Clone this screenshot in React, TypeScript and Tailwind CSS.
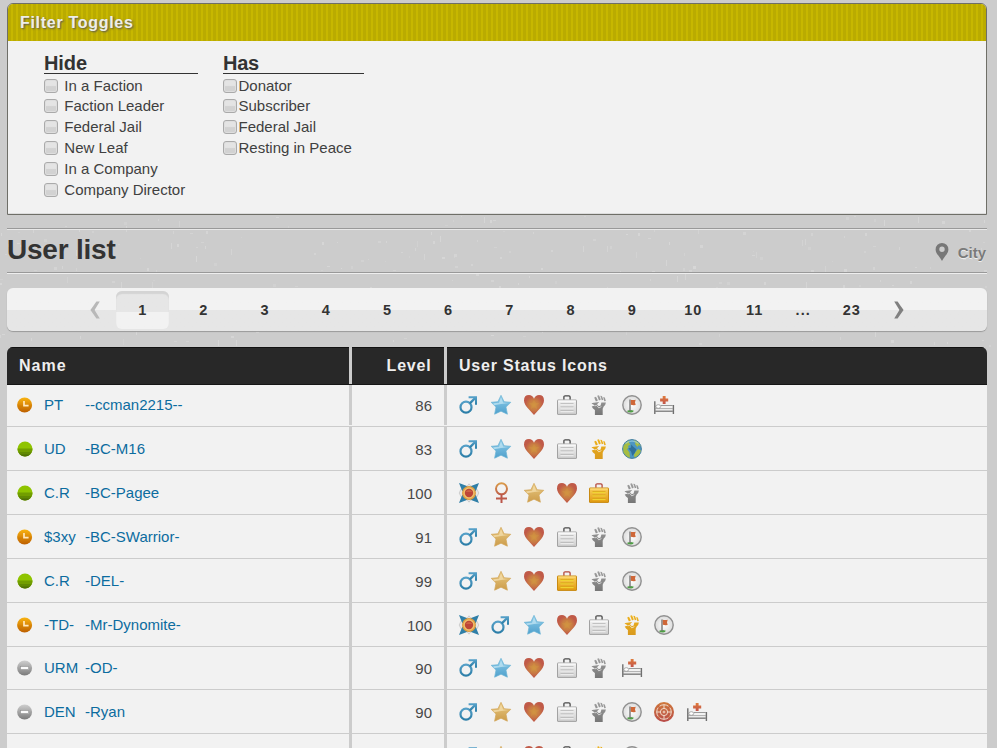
import React from "react";

type IconName =
  | "male" | "female" | "starBlue" | "starGold" | "heart" | "case" | "caseGold"
  | "fist" | "fistGold" | "flag" | "bed" | "globe" | "medal" | "target";

const STAR = "M10 .3 13.1 6.7 19.8 7.3 15 12.1 16.4 19.2 10 16.2 3.6 19.2 5 12.1 .2 7.3 6.9 6.7Z";

function Defs() {
  const g = (id: string, a: string, b: string) => (
    <linearGradient id={id} x1="0" y1="0" x2="0" y2="1">
      <stop offset="0" stopColor={a} />
      <stop offset="1" stopColor={b} />
    </linearGradient>
  );
  return (
    <svg className="absolute h-0 w-0">
      <defs>
        {g("gBlue", "#8fcdea", "#4fa0cc")}
        {g("gGold", "#e8c982", "#cc9c4a")}
        {g("gCase", "#f2f2f2", "#cfcfcf")}
        {g("gCaseGold", "#f9cf5a", "#e19a10")}
        {g("gMale", "#55a0c8", "#2c7ea8")}
        {g("gFemale", "#d99a4a", "#c0624b")}
        {g("gTarget", "#d07a3c", "#b84a48")}
        {g("gIdle", "#f9b310", "#bd5f00")}
        {g("gOff", "#cfcfcf", "#7a7a7a")}
        {g("gCross", "#e07c3c", "#c2544a")}
        <linearGradient id="gFist" gradientUnits="userSpaceOnUse" x1="0" y1="0" x2="0" y2="20">
          <stop offset="0" stopColor="#a0a0a0" />
          <stop offset="1" stopColor="#767676" />
        </linearGradient>
        <linearGradient id="gFistGold" gradientUnits="userSpaceOnUse" x1="0" y1="0" x2="0" y2="20">
          <stop offset="0" stopColor="#efb31c" />
          <stop offset="1" stopColor="#d99a1e" />
        </linearGradient>
        <radialGradient id="gHeart">
          <stop offset="0" stopColor="#cf9142" />
          <stop offset=".5" stopColor="#c97c43" />
          <stop offset=".9" stopColor="#c05a48" />
        </radialGradient>
        <radialGradient id="gFlag">
          <stop offset="0" stopColor="#ffffff" />
          <stop offset="1" stopColor="#dcdcdc" />
        </radialGradient>
      </defs>
    </svg>
  );
}

function Briefcase({ gold }: { gold?: boolean }) {
  return (
    <>
      <path d="M6.9 4.8V2Q6.9.8 8.1.8h3.8q1.2 0 1.2 1.2v2.8" fill="none" stroke={gold ? "#b4483c" : "#4a4a4a"} strokeWidth="1.3" />
      <rect x=".5" y="5" width="19" height="14.4" rx=".4" fill={gold ? "url(#gCaseGold)" : "url(#gCase)"} stroke={gold ? "#c98a12" : "#a2a2a2"} />
      <path d="M1.3 6h17.4" stroke={gold ? "#ffe08a" : "#fff"} />
      <path d="M3.5 9.6h13M3.5 12.8h13M3.5 16.6h13" stroke={gold ? "#f6e23a" : "#fafafa"} strokeWidth="1" />
      <path d="M3.5 8.7h13M3.5 11.9h13M3.5 15.7h13" stroke={gold ? "#d9a516" : "#b4b4b4"} strokeWidth=".9" />
    </>
  );
}

function Fist({ gold }: { gold?: boolean }) {
  return (
    <g fill={gold ? "url(#gFistGold)" : "url(#gFist)"}>
      <path d="M5.2 2.4 7 1.7 8.9 5.6 6.9 6.5Z" />
      <path d="M8.2.8 10 .3 11.8 4.6 10 5.4Z" />
      <path d="M11.3.7 12.9.9 14.4 4.8 12.8 5.3Z" />
      <path d="M14.2 2 15.8 2.6 16.8 5.9 15.3 6.3Z" />
      <path d="M2.5 8.6Q3.5 7.6 5 7.7L10.2 7 8 9.2 9.8 11.3 11.6 10.6 12.4 7.6 16.9 7.4Q16.6 10 14.7 11.6L13.7 13.8V20H5.9V14.9L4 13.6 2.7 11.6 6 10.4Z" />
      <path d="M5.8 10.9 7.6 10.3 9.8 12.9 12.4 11.6" fill="none" stroke="#f2f2f2" strokeWidth=".7" />
    </g>
  );
}

function Icon({ name }: { name: IconName }) {
  let body: React.ReactNode = null;
  switch (name) {
    case "male":
      body = (
        <g fill="none" stroke="url(#gMale)" strokeWidth="2.2">
          <circle cx="7" cy="12.2" r="5.5" />
          <path d="M10.8 8.4 16.8 2.4" />
          <path d="M9.6 2.2H17V9.8" strokeWidth="2" />
        </g>
      );
      break;
    case "female":
      body = (
        <g fill="none" strokeWidth="2">
          <circle cx="10.5" cy="5.8" r="5.5" stroke="url(#gFemale)" />
          <path d="M10.5 11.3V20" stroke="#bb564a" />
          <path d="M5 15.6h11" stroke="#bd5b4b" />
        </g>
      );
      break;
    case "starBlue":
      body = (
        <>
          <path d={STAR} fill="url(#gBlue)" stroke="#6db4d6" strokeWidth=".7" />
          <path d="M10 2.3 12.2 7.5 17.8 8.1Q10 8.8 3 10.2L2.2 8.2 8 7.7Z" fill="#c8e8f5" opacity=".7" />
        </>
      );
      break;
    case "starGold":
      body = (
        <>
          <path d={STAR} fill="url(#gGold)" stroke="#d2a65a" strokeWidth=".7" />
          <path d="M10 2.3 12.2 7.5 17.8 8.1Q10 8.8 3 10.2L2.2 8.2 8 7.7Z" fill="#f6e3b4" opacity=".7" />
        </>
      );
      break;
    case "heart":
      body = (
        <>
          <path d="M10 20Q7.9 17.8 4.8 14.3Q0 9 0 5.4Q0 0 5 0Q8.4 0 10 3.7Q11.6 0 15 0Q20 0 20 5.4Q20 9 15.2 14.3Q12.1 17.8 10 20Z" fill="url(#gHeart)" />
          <path d="m10 4.5 1.5 3.3 3.7.5-2.8 2.3.8 3.6-3.2-1.9-3.2 1.9.8-3.6-2.8-2.3 3.7-.5Z" fill="#d79e40" opacity=".3" />
        </>
      );
      break;
    case "case":
      body = <Briefcase />;
      break;
    case "caseGold":
      body = <Briefcase gold />;
      break;
    case "fist":
      body = <Fist />;
      break;
    case "fistGold":
      body = <Fist gold />;
      break;
    case "flag":
      body = (
        <>
          <circle cx="10" cy="10" r="9.2" fill="url(#gFlag)" stroke="#909090" strokeWidth="1.4" />
          <path d="M4.9 16Q8.5 14 11.8 15.8Q11.5 17.5 9 17.6Q6 17.6 4.9 16Z" fill="#4f9e46" />
          <path d="M8 4.5V16" stroke="#777" strokeWidth="1.4" />
          <path d="M8.8 4.7Q10.8 5.4 13.7 4.7L13 7.2 13.7 10Q10.8 10.4 8.8 9.8Z" fill="#cf6738" />
        </>
      );
      break;
    case "bed":
      body = (
        <>
          <path d="M8.7 1h2.9v2.5h2.6v2.9h-2.6v2.5H8.7V6.4H6.1V3.5h2.6Z" fill="url(#gCross)" />
          <path d="M6.7 10.5h12" stroke="#8f8f8f" strokeWidth=".9" />
          <path d="M1.4 13.6h17.4" stroke="#a5a5a5" strokeWidth=".9" />
          <ellipse cx="4.3" cy="11.5" rx="2.4" ry="1.8" fill="#fff" stroke="#999" strokeWidth=".8" />
          <path d="M1.2 16.2h17.6" stroke="#8a8a8a" strokeWidth="1.6" />
          <path d="M.8 6.2V19M19.4 10V19" stroke="#6f6f6f" strokeWidth="1.4" />
        </>
      );
      break;
    case "globe":
      body = (
        <>
          <circle cx="10" cy="10" r="9.4" fill="#4d96c1" stroke="#427e9d" strokeWidth="1" />
          <path d="M1.2 8Q3 3 7.6 1.5L7 3.7 8.5 5.4 6 7 6.6 9 5 10 7.5 13.4 8 18.7Q3.5 17.5 1.4 13Z" fill="#a6bd42" />
          <path d="M11.5 1.2Q17 2.3 18.6 7L16.3 6.3 15.4 8 13.2 5.3 13.3 3.5Z" fill="#a6bd42" />
          <path d="M14 12.4 16 10 18.9 11.5Q17.7 16.4 12.5 18.6L11.9 15.8Z" fill="#a6bd42" />
          <path d="M6.4 9.4 9 8.4 9.3 5.6 11 7.6 14.4 10.3 12.7 14 10.4 17 9 12.6Z" fill="#2f6f9b" />
          <path d="M3.5 4.5Q10-.5 16.5 4.5" stroke="#a7d5e7" strokeWidth="1.4" fill="none" opacity=".6" />
        </>
      );
      break;
    case "medal":
      body = (
        <>
          <path d="M10 .8 13.3 5 18 6.2 19.8 10 18 13.8 13.3 15 10 19.2 6.7 15 2 13.8 .2 10 2 6.2 6.7 5Z" fill="#e6e6e6" stroke="#b8b8b8" strokeWidth=".6" />
          <path d="M0 0 8.6 3.2 3.4 8.4ZM20 0 11.4 3.2 16.6 8.4ZM0 20 8.6 16.8 3.4 11.6ZM20 20 11.4 16.8 16.6 11.6Z" fill="#307fa7" />
          <circle cx="10" cy="10" r="6.3" fill="#efc06c" stroke="#dd9b3f" strokeWidth="1.3" />
          <circle cx="10" cy="10" r="4.2" fill="#bd4639" />
          <path d="M6.6 9Q10 4.8 13.4 9Z" fill="#cf6344" />
        </>
      );
      break;
    case "target":
      body = (
        <>
          <circle cx="10" cy="10" r="10" fill="url(#gTarget)" />
          <g fill="none" stroke="#f1dccb" strokeWidth="1">
            <circle cx="10" cy="10" r="7.3" />
            <circle cx="10" cy="10" r="3.6" />
            <path d="M10 2.7v3.7M10 13.6v3.7M2.7 10h3.7M13.6 10h3.7" />
            <path d="M10 8.6v2.8M8.6 10h2.8" />
          </g>
          <path d="m3.9 3.9 1.8 1.8M16.1 3.9l-1.8 1.8M3.9 16.1l1.8-1.8M16.1 16.1l-1.8-1.8" stroke="#c4633f" strokeWidth="1.6" />
        </>
      );
      break;
  }
  return (
    <svg viewBox="0 0 20 20" className="mr-[12.6px] h-5 w-5 shrink-0 overflow-visible">
      {body}
    </svg>
  );
}

type Status = "idle" | "online" | "offline";

function StatusDot({ status }: { status: Status }) {
  return (
    <svg viewBox="0 0 16 16" className="h-4 w-4 shrink-0">
      {status === "idle" && (
        <>
          <circle cx="7.6" cy="8" r="7.5" fill="url(#gIdle)" />
          <path d="M.5 9.2h14.2" stroke="#cf7d00" strokeWidth="1.2" opacity=".6" />
          <path d="M7 4v4.6h4.6" stroke="#ffe8bf" strokeWidth="1.7" fill="none" />
        </>
      )}
      {status === "online" && (
        <>
          <circle cx="8" cy="8" r="7.5" fill="#8fc400" />
          <path d="M.5 7.5Q.5 9 1.2 11h13.6Q15.5 9 15.5 7.5Z" fill="#729e00" />
          <path d="M1.2 11a7.5 7.5 0 0 0 13.6 0Z" fill="#618a02" />
          <path d="M3 13.5a7.5 7.5 0 0 0 10 0Z" fill="#4f6f08" />
        </>
      )}
      {status === "offline" && (
        <>
          <circle cx="7.6" cy="8" r="7.5" fill="url(#gOff)" />
          <rect x="3.6" y="6.6" width="8" height="2.9" fill="#fafafa" stroke="#8a8a8a" strokeWidth=".5" />
        </>
      )}
    </svg>
  );
}

interface User {
  status: Status;
  tag: string;
  name: string;
  level: number;
  icons: IconName[];
  height: string;
}

const users: User[] = [
  { status: "idle", tag: "PT", name: "--ccman2215--", level: 86, icons: ["male", "starBlue", "heart", "case", "fist", "flag", "bed"], height: "h-[42px] pb-px" },
  { status: "online", tag: "UD", name: "-BC-M16", level: 83, icons: ["male", "starBlue", "heart", "case", "fistGold", "globe"], height: "h-11" },
  { status: "online", tag: "C.R", name: "-BC-Pagee", level: 100, icons: ["medal", "female", "starGold", "heart", "caseGold", "fist"], height: "h-11" },
  { status: "idle", tag: "$3xy", name: "-BC-SWarrior-", level: 91, icons: ["male", "starGold", "heart", "case", "fist", "flag"], height: "h-11" },
  { status: "online", tag: "C.R", name: "-DEL-", level: 99, icons: ["male", "starGold", "heart", "caseGold", "fist", "flag"], height: "h-11" },
  { status: "idle", tag: "-TD-", name: "-Mr-Dynomite-", level: 100, icons: ["medal", "male", "starBlue", "heart", "case", "fistGold", "flag"], height: "h-11" },
  { status: "offline", tag: "URM", name: "-OD-", level: 90, icons: ["male", "starBlue", "heart", "case", "fist", "bed"], height: "h-[43px]" },
  { status: "offline", tag: "DEN", name: "-Ryan", level: 90, icons: ["male", "starGold", "heart", "case", "fist", "flag", "target", "bed"], height: "h-11" },
];

function Check({ label, gap }: { label: string; gap: string }) {
  return (
    <label className={"flex h-[20.85px] items-center text-[15px] leading-[20px] text-[#404040] " + gap}>
      <span className="h-[14px] w-[14px] shrink-0 rounded-[3px] border border-[#aaa] bg-linear-to-b from-[#e4e4e4] from-45% to-[#d2d2d2] to-55% shadow-[inset_0_0_0_1px_#dedede]" />
      <span className="whitespace-nowrap">{label}</span>
    </label>
  );
}

function Texture() {
  const marks: React.ReactNode[] = [];
  let seed = 7;
  const rnd = () => {
    seed = (seed * 16807) % 2147483647;
    return seed / 2147483647;
  };
  for (let i = 0; i < 300; i++) {
    const x = Math.floor(rnd() * 990);
    const y = Math.floor(216 + rnd() * 130);
    const tall = rnd() > 0.88;
    marks.push(
      <rect key={i} x={x} y={y} width={tall ? 1 : 1 + Math.floor(rnd() * 3)} height={tall ? 6 : 1 + Math.floor(rnd() * 3)} fill="#d7d7d7" opacity={0.45 + rnd() * 0.5} />
    );
  }
  return (
    <svg width="997" height="748" className="absolute inset-0 -z-10">
      {marks}
    </svg>
  );
}

const pages = ["1", "2", "3", "4", "5", "6", "7", "8", "9", "10", "11", "...", "23"];

export default function App() {
  return (
    <div className="relative isolate h-[748px] w-[997px] overflow-hidden bg-[#ccc] pt-[3px] pr-[10px] pl-[7px] font-['Liberation_Sans',Arial,sans-serif] text-[#333]">
      <Defs />
      <Texture />

      <section className="h-[212px] overflow-hidden rounded-t-[6px] border border-[#6f6f68] bg-[#f2f2f2] shadow-[inset_0_-1px_0_#ddd]">
        <header className="flex h-[37px] items-center bg-[repeating-linear-gradient(90deg,#baab00_0px,#baab00_3px,#c7b700_3px,#c7b700_5px)] pl-3 text-[16px] font-bold tracking-[0.7px] text-[#eeeeea] [text-shadow:1px_1px_2px_#555]">
          Filter Toggles
        </header>
        <div className="flex gap-[25px] pt-3 pl-[36px]">
          <div className="w-[154px]">
            <h3 className="mb-[1.1px] h-[21px] border-b border-[#333] text-[20px] leading-[21px] font-bold tracking-[-0.1px]">Hide</h3>
            {["In a Faction", "Faction Leader", "Federal Jail", "New Leaf", "In a Company", "Company Director"].map((l) => (
              <Check key={l} label={l} gap="gap-[6.3px]" />
            ))}
          </div>
          <div className="w-[141px]">
            <h3 className="mb-[1.1px] h-[21px] border-b border-[#333] text-[20px] leading-[21px] font-bold tracking-[-0.3px]">Has</h3>
            {["Donator", "Subscriber", "Federal Jail", "Resting in Peace"].map((l) => (
              <Check key={l} label={l} gap="gap-[1.5px]" />
            ))}
          </div>
        </div>
      </section>

      <div className="mt-[13px] flex h-[46px] items-center justify-between border-t border-b border-t-[#999] border-b-[#eee] shadow-[inset_0_1px_0_#e8e8e8,inset_0_-1px_0_#999]">
        <h1 className="-mt-[3px] text-[28px] leading-8 font-bold tracking-[-0.22px]">User list</h1>
        <a className="mt-[2px] mr-px flex items-center gap-[8.5px] text-[15px] font-bold text-[#7a7a7a] [text-shadow:0_1px_0_#eee]">
          <svg viewBox="0 0 14 18" className="h-[18px] w-[14px]">
            <path fillRule="evenodd" fill="#777" d="M7 0a6.4 6.4 0 0 0-6.4 6.4C.6 10.5 4.6 13.4 7 18c2.4-4.6 6.4-7.5 6.4-11.6A6.4 6.4 0 0 0 7 0Zm0 3.6a2.7 2.7 0 1 1 0 5.4 2.7 2.7 0 0 1 0-5.4Z" />
          </svg>
          <span className="pt-[2px]">City</span>
        </a>
      </div>

      <nav className="mt-[14px] flex h-[43px] items-center rounded-[6px] bg-linear-to-b from-[#f2f2f2] from-50% to-[#e6e6e6] to-50% text-[14.5px] font-bold shadow-[0_1px_1px_#999]">
        <div className="flex w-[104.6px] justify-end pr-3">
          <svg viewBox="0 0 10 18" className="h-[18px] w-[10px]">
            <path d="M6.4.5H9.8Q7 5 4.6 9Q7 13 9.8 17.5H6.4Q3.4 13 .4 9Q3.4 5 6.4.5Z" fill="#b8b8b8" />
          </svg>
        </div>
        {pages.map((p, i) => (
          <div key={p} className={"flex justify-center " + (p === "..." ? "w-[36px]" : "w-[61.2px]")}>
            <span
              className={
                "flex h-[38px] items-center justify-center pt-[2px] pl-px tracking-[1px] " +
                (i === 0
                  ? "w-[53px] rounded-[6px] bg-linear-to-b from-[#e6e6e6] from-54% to-[#f2f2f2] to-55% shadow-[inset_0_3px_1px_#d4d4d4]"
                  : "")
              }
            >
              {p}
            </span>
          </div>
        ))}
        <svg viewBox="0 0 10 18" className="ml-3 h-[18px] w-[10px]">
          <path d="M3.6.5H.2Q3 5 5.4 9Q3 13 .2 17.5H3.6Q6.6 13 9.6 9Q6.6 5 3.6.5Z" fill="#808080" />
        </svg>
      </nav>

      <div className="mt-4 overflow-hidden rounded-t-[6px]">
        <div className="flex h-[38px] border-b border-[#161616] bg-[#282828] text-[16px] leading-[37px] font-bold tracking-[0.8px] text-[#eee] shadow-[inset_0_1px_0_#111]">
          <div className="w-[345px] border-r-[3px] border-[#ccc] pl-[12px] tracking-[1px]">Name</div>
          <div className="w-[95px] border-r-[3px] border-[#ccc] pr-[12.5px] text-right">Level</div>
          <div className="flex-1 pl-[12px]">User Status Icons</div>
        </div>
        {users.map((u) => (
          <div key={u.name} className={"flex border-b border-[#ccc] bg-[#f2f2f2] text-[15px] " + u.height}>
            <div className="flex w-[345px] items-center border-r-[3px] border-[#ccc] pl-[10px] text-[#0c6c9f]">
              <StatusDot status={u.status} />
              <span className="ml-[11px] w-[41px] pt-px">{u.tag}</span>
              <span className="pt-px">{u.name}</span>
            </div>
            <div className="flex w-[95px] items-center justify-end border-r-[3px] border-[#ccc] pt-[3px] pr-3 text-[#484848]">{u.level}</div>
            <div className="flex flex-1 items-center pl-[11.9px]">
              {u.icons.map((n) => (
                <Icon key={n} name={n} />
              ))}
            </div>
          </div>
        ))}
        <div className="flex h-11 bg-[#f2f2f2]">
          <div className="w-[345px] border-r-[3px] border-[#ccc]" />
          <div className="w-[95px] border-r-[3px] border-[#ccc]" />
          <div className="flex flex-1 items-center pl-[11.9px]">
            {(["male", "starGold", "heart", "case", "fistGold", "flag"] as IconName[]).map((n) => (
              <Icon key={n} name={n} />
            ))}
          </div>
        </div>
      </div>
    </div>
  );
}
